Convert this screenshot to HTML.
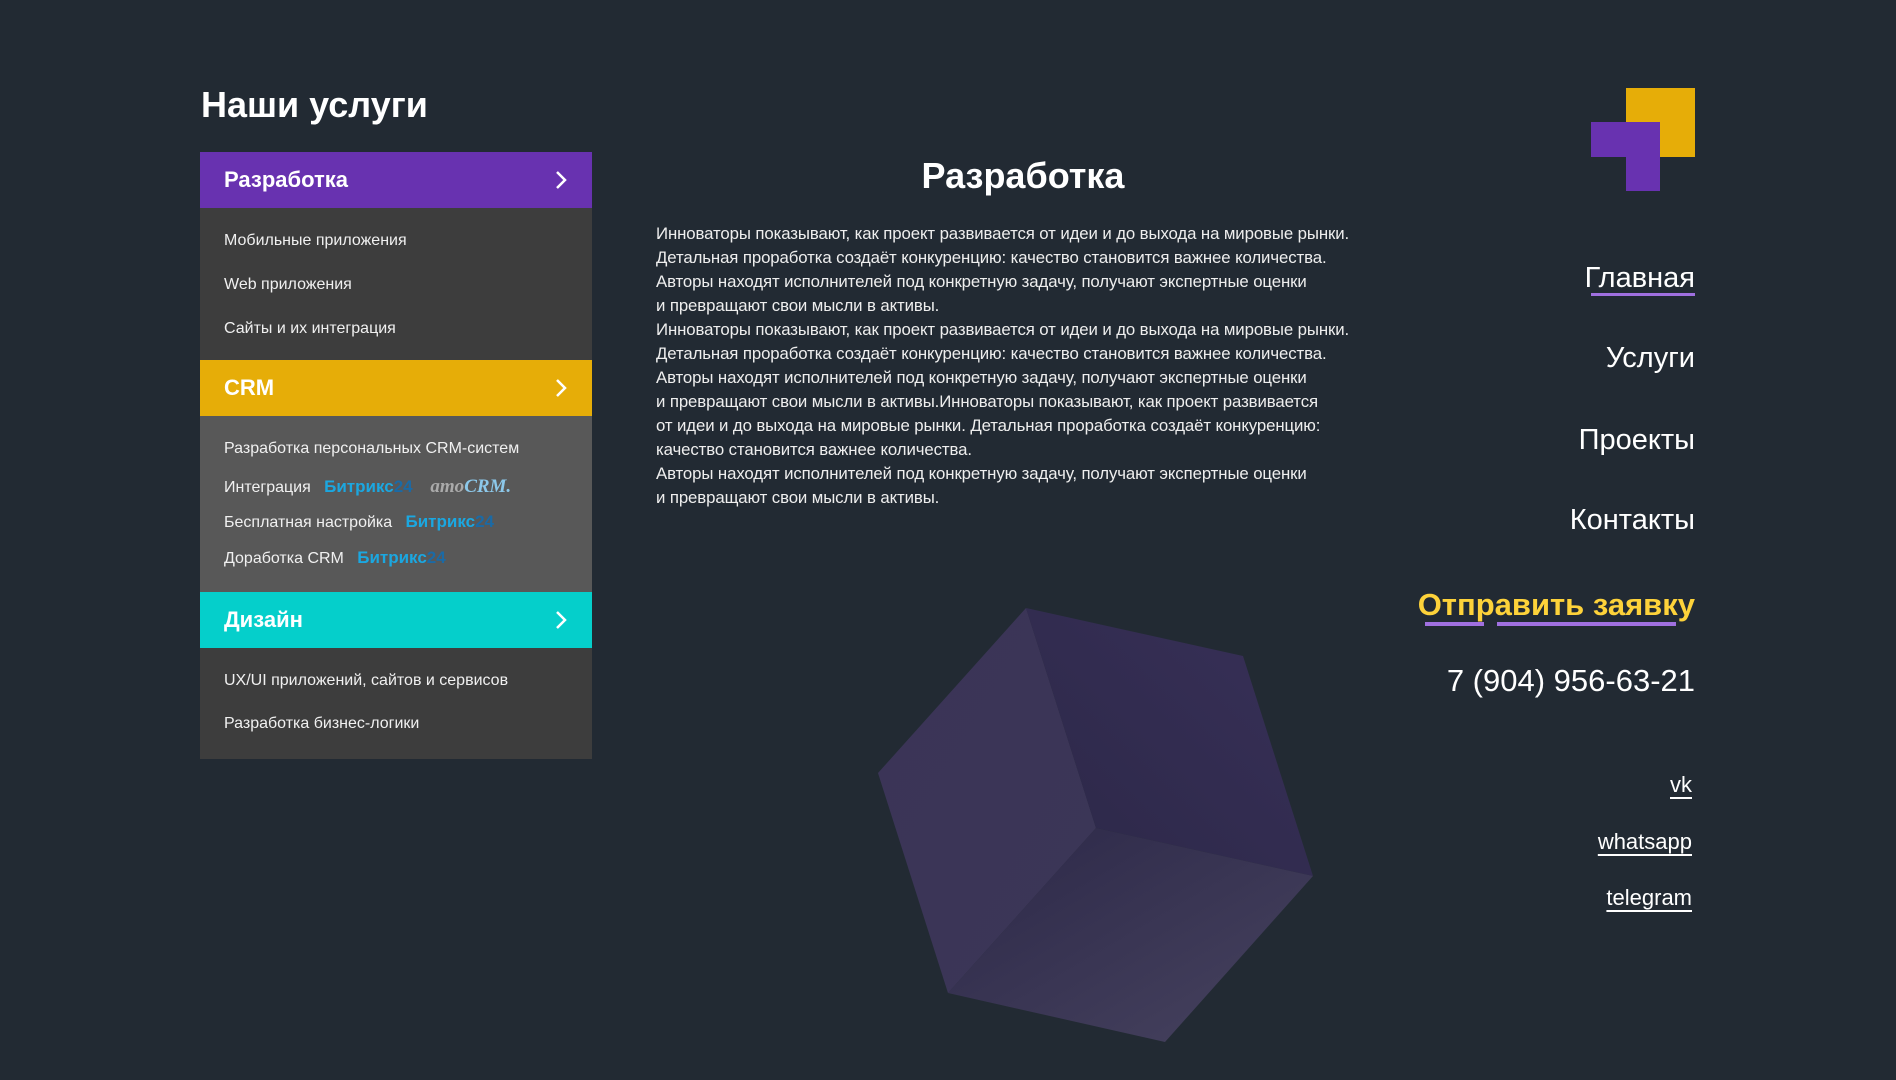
<!DOCTYPE html>
<html><head><meta charset="utf-8"><style>
*{margin:0;padding:0;box-sizing:border-box}
body{width:1896px;height:1080px;background:#222a33;font-family:"Liberation Sans","DejaVu Sans",sans-serif;color:#fff;position:relative;overflow:hidden}
.a{position:absolute;white-space:nowrap}
.h{left:200px;width:392px;height:56px;font-size:22px;font-weight:bold;padding-left:24px;line-height:56px}
.h svg{position:absolute;right:24px;top:18px}
.p{left:200px;width:392px}
.it{position:absolute;left:24px;font-size:16px;color:#f0f0f0}
.bx{color:#1ba7e0;font-weight:bold;font-size:17px}
.bx b{color:#1b6aa5}
.nav{right:201px;font-size:29px;text-align:right}
.soc{right:204px;font-size:22px;text-decoration:underline;text-underline-offset:5px;text-decoration-thickness:2px}
.txt{left:656px;top:222px;font-size:16.8px;line-height:24px;color:#eee;letter-spacing:-0.1px}
</style></head><body>
<div class="a" style="left:201px;top:84px;font-size:36px;font-weight:bold">Наши услуги</div>

<div class="a h" style="top:152px;background:#6832b0">Разработка<svg width="14" height="20"><path d="M3 2l8 8-8 8" stroke="#fff" stroke-width="2.5" fill="none"/></svg></div>
<div class="a p" style="top:208px;height:152px;background:#3d3d3d">
<div class="it" style="top:24px">Мобильные приложения</div>
<div class="it" style="top:68px">Web приложения</div>
<div class="it" style="top:112px">Сайты и их интеграция</div>
</div>
<div class="a h" style="top:360px;background:#e6ad08">CRM<svg width="14" height="20"><path d="M3 2l8 8-8 8" stroke="#fff" stroke-width="2.5" fill="none"/></svg></div>
<div class="a p" style="top:416px;height:176px;background:#585858">
<div class="it" style="top:24px">Разработка персональных CRM-систем</div>
<div class="it" style="top:60px">Интеграция&nbsp;&nbsp; <span class="bx">Битрикс<b>24</b></span>&nbsp;&nbsp;&nbsp; <span style="font-style:italic;font-weight:bold;font-size:19px;color:#aaa;font-family:'Liberation Serif',serif">amo<span style="color:#8cc8ea">CRM.</span></span></div>
<div class="it" style="top:96px">Бесплатная настройка&nbsp;&nbsp; <span class="bx">Битрикс<b>24</b></span></div>
<div class="it" style="top:132px">Доработка CRM&nbsp;&nbsp; <span class="bx">Битрикс<b>24</b></span></div>
</div>
<div class="a h" style="top:592px;background:#05cfcb">Дизайн<svg width="14" height="20"><path d="M3 2l8 8-8 8" stroke="#fff" stroke-width="2.5" fill="none"/></svg></div>
<div class="a p" style="top:648px;height:111px;background:#3d3d3d">
<div class="it" style="top:24px">UX/UI приложений, сайтов и сервисов</div>
<div class="it" style="top:67px">Разработка бизнес-логики</div>
</div>

<div class="a" style="left:823px;width:400px;text-align:center;top:155px;font-size:36px;font-weight:bold">Разработка</div>
<div class="a txt">Инноваторы показывают, как проект развивается от идеи и до выхода на мировые рынки.<br>Детальная проработка создаёт конкуренцию: качество становится важнее количества.<br>Авторы находят исполнителей под конкретную задачу, получают экспертные оценки<br>и превращают свои мысли в активы.<br>Инноваторы показывают, как проект развивается от идеи и до выхода на мировые рынки.<br>Детальная проработка создаёт конкуренцию: качество становится важнее количества.<br>Авторы находят исполнителей под конкретную задачу, получают экспертные оценки<br>и превращают свои мысли в активы.Инноваторы показывают, как проект развивается<br>от идеи и до выхода на мировые рынки. Детальная проработка создаёт конкуренцию:<br>качество становится важнее количества.<br>Авторы находят исполнителей под конкретную задачу, получают экспертные оценки<br>и превращают свои мысли в активы.</div>

<svg class="a" style="left:0;top:0" width="1896" height="1080">
<defs>
<linearGradient id="g1" x1="0" y1="0" x2="1" y2="1"><stop offset="0" stop-color="#3b3457"/><stop offset="1" stop-color="#3b3657"/></linearGradient>
<linearGradient id="g2" x1="1" y1="0" x2="0" y2="1"><stop offset="0" stop-color="#383058"/><stop offset="1" stop-color="#2c2848"/></linearGradient>
<linearGradient id="g3" x1="0" y1="0" x2="1" y2="1"><stop offset="0" stop-color="#2c2848"/><stop offset="1" stop-color="#47435f"/></linearGradient>
</defs>
<polygon points="1026,608 1096,828 948,993 878,773" fill="url(#g1)"/>
<polygon points="1026,608 1243,656 1313,876 1096,828" fill="url(#g2)"/>
<polygon points="1096,828 1313,876 1165,1042 948,993" fill="url(#g3)"/>
<rect x="1626" y="88" width="69" height="69" fill="#e6ad08"/>
<rect x="1591" y="122" width="69" height="35" fill="#6832b0"/>
<rect x="1626" y="157" width="34" height="34" fill="#6832b0"/>
<rect x="1591" y="293" width="104" height="3" fill="#a070e0"/>
<rect x="1425" y="622" width="59" height="4" fill="#a070e0"/>
<rect x="1497" y="622" width="179" height="4" fill="#a070e0"/>
</svg>

<div class="a nav" style="top:262px">Главная</div>
<div class="a nav" style="top:342px">Услуги</div>
<div class="a nav" style="top:424px">Проекты</div>
<div class="a nav" style="top:504px">Контакты</div>
<div class="a nav" style="top:587px;font-weight:bold;color:#fdd23a;font-size:31px">Отправить заявку</div>
<div class="a nav" style="top:663px;font-size:31px">7 (904) 956-63-21</div>
<div class="a soc" style="top:772px">vk</div>
<div class="a soc" style="top:829px">whatsapp</div>
<div class="a soc" style="top:885px">telegram</div>
</body></html>
